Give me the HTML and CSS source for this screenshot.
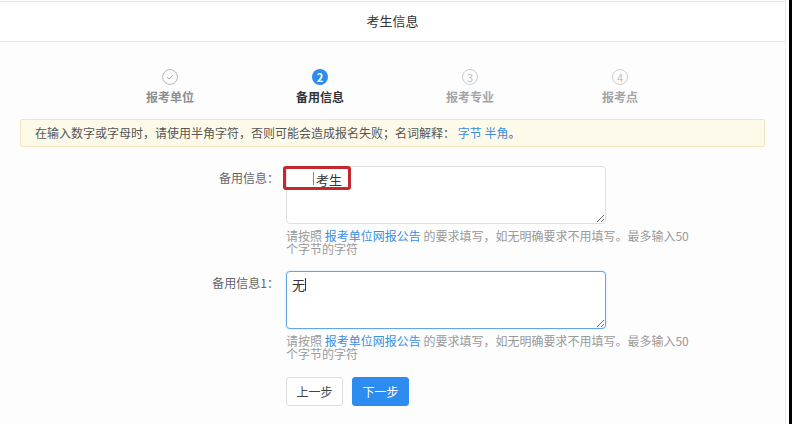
FILE: index.html
```html
<!DOCTYPE html>
<html lang="zh-CN">
<head>
<meta charset="utf-8">
<title>考生信息</title>
<link rel="stylesheet" href="styles.css">
</head>
<body>
<div class="frame">
  <div class="page">
    <div class="header">考生信息</div>

    <div class="steps">
      <div class="step done">
        <span class="step-icon">
          <svg width="16" height="16" viewBox="0 0 16 16"><circle cx="8" cy="8" r="7.4" fill="none" stroke="#b8b8b8" stroke-width="1"/><path d="M5.2 8.2 L7.2 10 L10.8 6.2" fill="none" stroke="#a8a8a8" stroke-width="1"/></svg>
        </span>
        <span class="step-label">报考单位</span>
      </div>
      <div class="step active">
        <span class="step-icon num">2</span>
        <span class="step-label">备用信息</span>
      </div>
      <div class="step wait">
        <span class="step-icon num">3</span>
        <span class="step-label">报考专业</span>
      </div>
      <div class="step wait">
        <span class="step-icon num">4</span>
        <span class="step-label">报考点</span>
      </div>
    </div>

    <div class="alert">在输入数字或字母时，请使用半角字符，否则可能会造成报名失败；名词解释： <a class="link">字节</a> <a class="link">半角</a>。</div>

    <div class="form">
      <div class="row">
        <label class="label">备用信息：</label>
        <div class="field">
          <textarea class="input indent">考生</textarea>
          <span class="mark"></span>
          <span class="caret light"></span>
          <div class="help">请按照 <a class="link">报考单位网报公告</a> 的要求填写，如无明确要求不用填写。最多输入50个字节的字符</div>
        </div>
      </div>
      <div class="row second">
        <label class="label">备用信息1：</label>
        <div class="field">
          <textarea class="input focus">无</textarea>
          <span class="caret dark"></span>
          <div class="help">请按照 <a class="link">报考单位网报公告</a> 的要求填写，如无明确要求不用填写。最多输入50个字节的字符</div>
        </div>
      </div>
      <div class="actions">
        <button class="btn">上一步</button>
        <button class="btn primary">下一步</button>
      </div>
    </div>
  </div>
</div>
</body>
</html>
```

FILE: styles.css
```css
* { box-sizing: border-box; }
html, body { margin: 0; padding: 0; }
body {
  width: 792px;
  height: 424px;
  background: #000;
  overflow: hidden;
  font-family: "Noto Sans CJK SC", "Noto Sans", "Liberation Sans", sans-serif;
  color: #333;
}
.frame {
  width: 789px;
  height: 424px;
  background: #fff;
}
.page {
  width: 786px;
  height: 424px;
  border-right: 1px solid #ececec;
  background: #fdfdfd;
  padding-top: 1px;
}
.header {
  height: 41px;
  border-top: 1px solid #e6e6e6;
  border-bottom: 1px solid #e6e6e6;
  background: #fff;
  text-align: center;
  font-size: 13px;
  line-height: 38px;
  color: #333;
}
.steps {
  display: flex;
  padding-left: 95px;
  margin-top: 27px;
}
.step {
  width: 150px;
  display: flex;
  flex-direction: column;
  align-items: center;
}
.step-icon {
  width: 16px;
  height: 16px;
  display: flex;
  align-items: center;
  justify-content: center;
}
.step-icon svg { display: block; }
.step-icon.num {
  border-radius: 50%;
  font-size: 11px;
  line-height: 1;
}
.active .step-icon.num {
  background: #2d8cf0;
  color: #fff;
  font-weight: bold;
}
.wait .step-icon.num {
  border: 1px solid #cfcfcf;
  color: #bdbdbd;
}
.step-label {
  margin-top: 3px;
  font-size: 12px;
  line-height: 18px;
  font-weight: bold;
}
.done .step-label { color: #8f8f8f; }
.active .step-label { color: #333; }
.wait .step-label { color: #a5a5a5; }

.alert {
  margin: 13px 20px 0 20px;
  height: 28px;
  border: 1px solid #f3e4bd;
  background: #fefaea;
  border-radius: 2px;
  padding: 0 14px;
  font-size: 12px;
  line-height: 26px;
  color: #555;
}
.link {
  color: #3a8ee0;
  text-decoration: none;
}

.form {
  padding-top: 19px;
}
.row {
  display: grid;
  grid-template-columns: 279px 405px;
  column-gap: 7px;
}
.row.second { margin-top: 16px; }
.label {
  text-align: right;
  font-size: 12px;
  line-height: 16px;
  padding-top: 4px;
  color: #666;
}
.field {
  position: relative;
}
.input {
  display: block;
  width: 320px;
  height: 58px;
  margin: 0;
  border: 1px solid #dcdee2;
  border-radius: 4px;
  padding: 3px 5px;
  font-family: "Noto Sans CJK SC", "Noto Sans", sans-serif;
  font-size: 13px;
  line-height: 20px;
  color: #333;
  background: #fff;
  resize: vertical;
  outline: none;
}
.input.indent { text-indent: 24px; }
.input.focus {
  border-color: #62a6e6;
  box-shadow: 0 0 2px rgba(45, 140, 240, 0.35);
}
.mark {
  position: absolute;
  left: -3px;
  top: 0;
  width: 68px;
  height: 24px;
  border: 3px solid #c3292c;
  border-radius: 3px;
}
.caret {
  position: absolute;
  width: 1px;
  height: 13px;
}
.caret.light { left: 27px; top: 6px; background: #888; }
.caret.dark { left: 19px; top: 7px; background: #333; }
.help {
  margin-top: 5px;
  font-size: 12px;
  line-height: 13px;
  color: #9a9a9a;
}
.actions {
  display: flex;
  gap: 9px;
  padding-left: 286px;
  margin-top: 17px;
}
.btn {
  width: 57px;
  height: 29px;
  border: 1px solid #dcdee2;
  border-radius: 3px;
  background: #fff;
  font-family: "Noto Sans CJK SC", "Noto Sans", sans-serif;
  font-size: 12px;
  color: #444;
  padding: 0;
}
.btn.primary {
  background: #2d8cf0;
  border-color: #2d8cf0;
  color: #fff;
}
```
